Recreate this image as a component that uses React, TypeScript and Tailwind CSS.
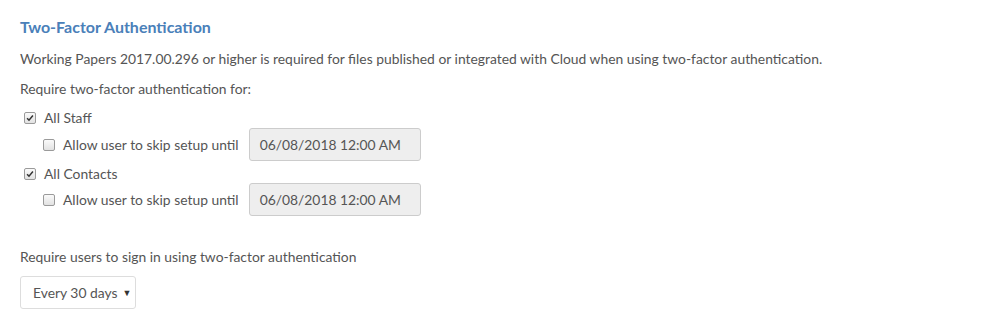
import React from 'react';

function Check({ checked }: { checked: boolean }) {
  return (
    <span className="w-[12px] h-[12px] rounded-[2px] border border-[#9a9a9a] bg-gradient-to-b from-[#fafafa] to-[#e2e2e2] flex items-center justify-center shrink-0">
      {checked && (
        <svg viewBox="0 0 12 12" className="w-[10px] h-[10px]">
          <path d="M2.5 6.2 L4.8 8.6 L9.5 3" fill="none" stroke="#333" strokeWidth="1.8" />
        </svg>
      )}
    </span>
  );
}

function SkipRow() {
  return (
    <div className="flex items-center pl-[23px] h-[33px]">
      <Check checked={false} />
      <span className="ml-[8px] mr-[10px]">Allow user to skip setup until</span>
      <div className="w-[172px] h-[33px] bg-[#eeeeee] border border-[#cccccc] rounded-[3px] flex items-center px-[10px] text-[#555]">
        06/08/2018 12:00 AM
      </div>
    </div>
  );
}

export default function App() {
  return (
    <div className="w-[994px] h-[329px] bg-white px-[20px] pt-[17px] text-[13.86px] leading-[20px] text-[#555555] font-['Lato','Noto_Sans',sans-serif]">
      <h2 className="text-[16px] font-bold text-[#4a80b9] leading-[20px]">Two-Factor Authentication</h2>
      <p className="mt-[12px]">
        Working Papers 2017.00.296 or higher is required for files published or integrated with Cloud when using two-factor authentication.
      </p>
      <p className="mt-[10px]">Require two-factor authentication for:</p>
      <div className="mt-[9px] flex flex-col">
        <label className="flex items-center pl-[4px] h-[20px]">
          <Check checked={true} />
          <span className="ml-[8px]">All Staff</span>
        </label>
        <SkipRow />
        <label className="flex items-center pl-[4px] h-[19px] mt-[3px]">
          <Check checked={true} />
          <span className="ml-[8px]">All Contacts</span>
        </label>
        <SkipRow />
      </div>
      <p className="mt-[31px]">Require users to sign in using two-factor authentication</p>
      <div className="mt-[9px] w-[116px] h-[33px] border border-[#dddddd] rounded-[3px] flex items-center pl-[12px] text-[#555]">
        <span>Every 30 days</span>
        <span className="ml-[5px] text-[9px] text-[#333]">▼</span>
      </div>
    </div>
  );
}
